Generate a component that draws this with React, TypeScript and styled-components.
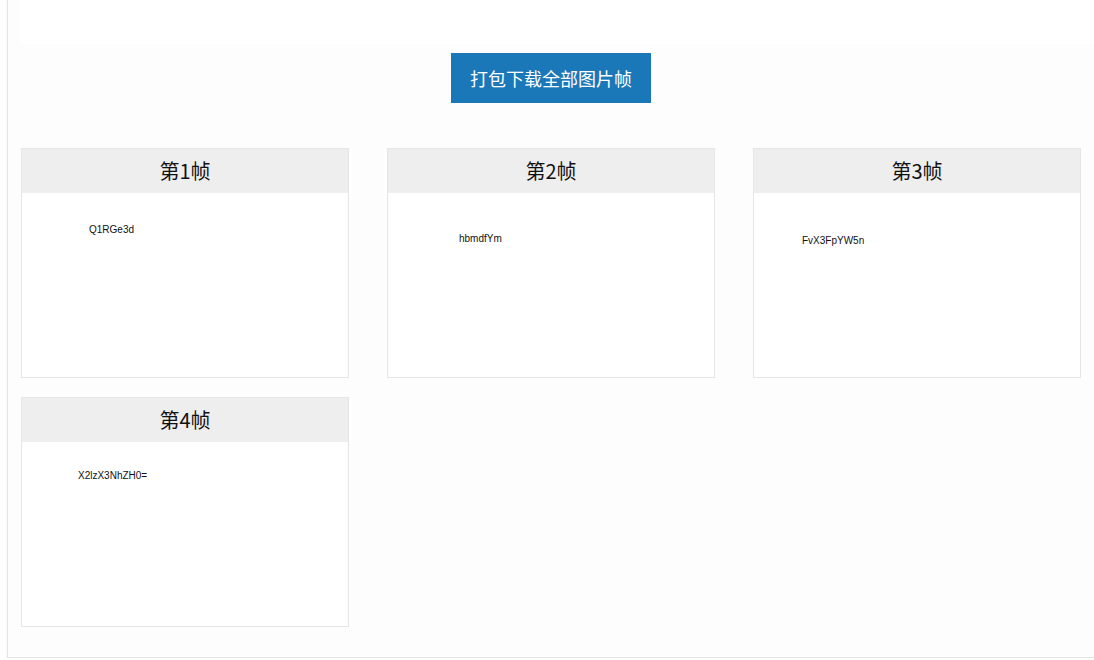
import React from "react";
import styled, { createGlobalStyle } from "styled-components";

const Global = createGlobalStyle`
  html, body { margin: 0; padding: 0; background: #ffffff; }
  body { font-family: "Noto Sans CJK SC", "Noto Sans", sans-serif; }
  * { box-sizing: border-box; }
`;

const Panel = styled.div`
  margin-left: 7px;
  height: 658px;
  background: #fdfdfd;
  border-left: 1px solid #e4e4e4;
  border-bottom: 1px solid #e4e4e4;
  box-shadow: 0 2px 3px rgba(0, 0, 0, 0.06);
  display: flex;
  flex-direction: column;
`;

const TopBar = styled.div`
  margin-left: 12px;
  height: 44px;
  background: #ffffff;
`;

const Actions = styled.div`
  display: flex;
  justify-content: center;
  padding-top: 9px;
`;

const DownloadButton = styled.button`
  width: 200px;
  height: 50px;
  border: none;
  background: #1a78b9;
  color: #ffffff;
  font-family: "Noto Sans CJK SC", sans-serif;
  font-size: 18px;
  cursor: pointer;
`;

const Grid = styled.div`
  display: grid;
  grid-template-columns: repeat(3, 328px);
  column-gap: 38px;
  row-gap: 19px;
  padding: 45px 13px 0 13px;
`;

const Card = styled.div`
  height: 230px;
  border: 1px solid #e6e6e6;
  background: #ffffff;
  display: flex;
  flex-direction: column;
`;

const CardHeader = styled.div`
  height: 44px;
  background: #eeeeee;
  display: flex;
  align-items: center;
  justify-content: center;
  padding-bottom: 2px;
  font-family: "Noto Sans CJK SC", sans-serif;
  font-size: 20px;
  color: #111111;
`;

const Frame = styled.div<{ $x: number; $y: number }>`
  flex: 1;
  padding: ${(p) => p.$y}px 0 0 ${(p) => p.$x}px;
  font-family: "Liberation Sans", Arial, sans-serif;
  font-size: 10px;
  line-height: 12px;
  color: #111111;
`;

const frames = [
  { title: "第1帧", text: "Q1RGe3d", x: 67, y: 31 },
  { title: "第2帧", text: "hbmdfYm", x: 71, y: 40 },
  { title: "第3帧", text: "FvX3FpYW5n", x: 48, y: 42 },
  { title: "第4帧", text: "X2lzX3NhZH0=", x: 56, y: 28 },
];

export default function App() {
  return (
    <>
      <Global />
      <Panel>
        <TopBar />
        <Actions>
          <DownloadButton>打包下载全部图片帧</DownloadButton>
        </Actions>
        <Grid>
          {frames.map((f) => (
            <Card key={f.title}>
              <CardHeader>{f.title}</CardHeader>
              <Frame $x={f.x} $y={f.y}>{f.text}</Frame>
            </Card>
          ))}
        </Grid>
      </Panel>
    </>
  );
}
